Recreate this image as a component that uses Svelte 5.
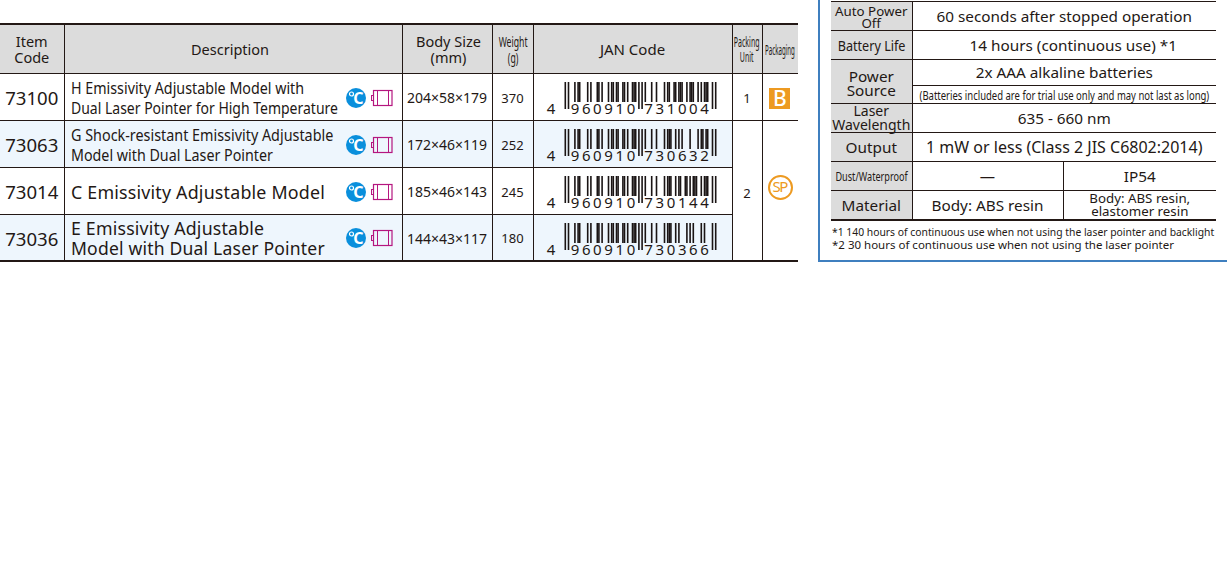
<script>
  const L = ['0001101','0011001','0010011','0111101','0100011','0110001','0101111','0111011','0110111','0001011'];
  const R = L.map((c) => [...c].map((b) => (b === '0' ? '1' : '0')).join(''));
  const G = R.map((c) => [...c].reverse().join(''));
  const PARITY = ['LLLLLL','LLGLGG','LLGGLG','LLGGGL','LGLLGG','LGGLLG','LGGGLL','LGLGLG','LGLGGL','LGGLGL'];
  const MOD = 1.6, X0 = 18.5, TX = 17;

  function bars(code) {
    const d = [...code].map(Number);
    const p = PARITY[d[0]];
    let s = '101';
    for (let i = 0; i < 6; i++) s += (p[i] === 'L' ? L : G)[d[i + 1]];
    s += '01010';
    for (let i = 0; i < 6; i++) s += R[d[i + 7]];
    s += '101';
    const out = [];
    for (let i = 0; i < s.length; i++) {
      if (s[i] !== '1') continue;
      const guard = i < 3 || i >= 92 || (i >= 45 && i < 50);
      out.push({ x: X0 + i * MOD, h: guard ? 27 : 20 });
    }
    return out;
  }
  function digits(code) {
    const out = [{ c: code[0], x: 5 }];
    for (let i = 1; i <= 6; i++) out.push({ c: code[i], x: TX + 1.6 + (3 + 7 * (i - 1) + 3.5) * MOD });
    for (let i = 7; i <= 12; i++) out.push({ c: code[i], x: TX + (50 + 7 * (i - 7) + 3.5) * MOD });
    return out;
  }

  const rows = [
    { id: '73100', lines: [['H Emissivity Adjustable Model with', 0.84], ['Dual Laser Pointer for High Temperature', 0.823]], fit: 'tight', size: '204×58×179', w: '370', jan: '4960910731004' },
    { id: '73063', lines: [['G Shock-resistant Emissivity Adjustable', 0.845], ['Model with Dual Laser Pointer', 0.84]], fit: 'tight', size: '172×46×119', w: '252', jan: '4960910730632', alt: true },
    { id: '73014', lines: [['C Emissivity Adjustable Model', 0.99]], fit: 'wide', size: '185×46×143', w: '245', jan: '4960910730144' },
    { id: '73036', lines: [['E Emissivity Adjustable', 0.985], ['Model with Dual Laser Pointer', 0.975]], fit: 'wide', size: '144×43×117', w: '180', jan: '4960910730366', alt: true }
  ];
</script>

<div class="page">
  <table class="products">
    <colgroup>
      <col style="width:64px" /><col style="width:338px" /><col style="width:90px" /><col style="width:41px" /><col style="width:199px" /><col style="width:30px" /><col style="width:36px" />
    </colgroup>
    <thead>
      <tr>
        <th class="two">Item<br />Code</th>
        <th class="dh">Description</th>
        <th class="bh">Body Size<br />(mm)</th>
        <th class="wh"><span class="squeeze s60">Weight<br />(g)</span></th>
        <th class="janh">JAN Code</th>
        <th class="two"><span class="squeeze s50 small">Packing<br />Unit</span></th>
        <th><span class="squeeze s44 small">Packaging</span></th>
      </tr>
    </thead>
    <tbody>
      {#each rows as r, i}
        <tr class:alt={r.alt}>
          <td class="id">{r.id}</td>
          <td class="desc">
            <div class="descwrap">
              <div class="name {r.fit}">
                {#each r.lines as [text, sx]}<div class="line" style="transform: scaleX({sx})">{text}</div>{/each}
              </div>
              <svg class="icons" width="50" height="22" viewBox="0 0 50 22" aria-hidden="true">
                <circle cx="12" cy="11" r="10" fill="#0a8fdc" />
                <circle cx="7.5" cy="7" r="2" fill="none" stroke="#fff" stroke-width="1.2" />
                <text x="14.5" y="17" class="deg" text-anchor="middle">C</text>
                <rect x="29.5" y="3.5" width="18.5" height="15" fill="none" stroke="#b5167f" stroke-width="1.2" />
                <line x1="33.5" y1="3.5" x2="33.5" y2="18.5" stroke="#b5167f" stroke-width="1" />
                <line x1="44.5" y1="3.5" x2="44.5" y2="18.5" stroke="#b5167f" stroke-width="1" />
                <rect x="27.5" y="8.5" width="2" height="5" fill="none" stroke="#b5167f" stroke-width="1" />
              </svg>
            </div>
          </td>
          <td class="size">{r.size}</td>
          <td class="weight">{r.w}</td>
          <td class="jan">
            <svg class="barcode" width="175" height="36" viewBox="0 0 175 36" role="img" aria-label={r.jan}>
              {#each bars(r.jan) as b}
                <rect x={b.x} y="0" width={MOD} height={b.h} fill="#1a1414" />
              {/each}
              {#each digits(r.jan) as d}
                <text x={d.x} y="32" class="digit" text-anchor="middle">{d.c}</text>
              {/each}
            </svg>
          </td>
          {#if i === 0}
            <td class="pack plain">1</td>
            <td class="plain mark">
              <span class="boxb">B</span>
            </td>
          {:else if i === 1}
            <td class="pack plain lower" rowspan="3">2</td>
            <td class="plain mark" rowspan="3">
              <span class="sp">SP</span>
            </td>
          {/if}
        </tr>
      {/each}
    </tbody>
  </table>

  <aside class="panel">
    <table class="spec">
      <colgroup><col style="width:81px" /><col style="width:151px" /><col style="width:153px" /></colgroup>
      <tbody>
        <tr class="h29"><th class="tiny auto">Auto Power<br />Off</th><td colspan="2">60 seconds after stopped operation</td></tr>
        <tr class="h29"><th class="mid"><span class="squeeze s90">Battery Life</span></th><td colspan="2" class="life">14 hours (continuous use) *1</td></tr>
        <tr class="h26"><th rowspan="2" class="pw">Power<br />Source</th><td colspan="2" class="dash">2x AAA alkaline batteries</td></tr>
        <tr class="h18"><td colspan="2" class="note"><span class="squeeze s73">(Batteries included are for trial use only and may not last as long)</span></td></tr>
        <tr class="h29"><th class="tiny laser">Laser<br />Wavelength</th><td colspan="2">635 - 660 nm</td></tr>
        <tr class="h29"><th>Output</th><td colspan="2" class="out">1 mW or less (Class 2 JIS C6802:2014)</td></tr>
        <tr class="h29"><th class="dust"><span class="squeeze s70">Dust/Waterproof</span></th><td>—</td><td>IP54</td></tr>
        <tr class="h29"><th>Material</th><td>Body: ABS resin</td><td class="tiny">Body: ABS resin,<br />elastomer resin</td></tr>
      </tbody>
    </table>
    <div class="foot">
      <div class="foot1">*1 140 hours of continuous use when not using the laser pointer and backlight</div>
      <div>*2 30 hours of continuous use when not using the laser pointer</div>
    </div>
  </aside>
</div>

<style>
  :global(body) {
    margin: 0;
    background: #fff;
  }
  .page {
    display: flex;
    align-items: flex-start;
    width: 1227px;
    height: 578px;
    overflow: hidden;
    font-family: "Noto Sans", "Liberation Sans", sans-serif;
    color: #231815;
  }
  table {
    border-collapse: collapse;
    table-layout: fixed;
  }
  .products {
    width: 798px;
    flex: none;
    margin-top: 23px;
    border-top: 2px solid #231815;
    border-bottom: 2px solid #231815;
  }
  .products th,
  .products td {
    border: 1px solid #231815;
    padding: 0;
    text-align: center;
    white-space: nowrap;
  }
  .products tr > :first-child { border-left: 0; }
  .products tr > :last-child { border-right: 0; }
  .products tbody tr:last-child td { border-bottom: 0; }
  .products thead th { border-top: 0; }
  .products thead tr { height: 49px; }
  .products tbody tr { height: 47px; }
  .products thead th {
    background: #dcdcdc;
    font-weight: 400;
    font-size: 14.5px;
    line-height: 16px;
  }
  .products thead th.dh { padding: 1px 6px 0 0; }
  .products thead th.bh { padding-left: 3px; }
  .products thead th.wh { padding-left: 1px; }
  .products thead th.janh { font-size: 15px; padding-top: 1px; }
  .alt td { background: #eef6fd; }
  .alt td.plain, td.plain { background: #fff; }
  .products td.id {
    font-size: 18.6px;
    padding-top: 2px;
  }
  .descwrap {
    display: flex;
    align-items: center;
    padding: 2px 8px 0 6px;
  }
  .name {
    flex: 1;
    min-width: 0;
    text-align: left;
  }
  .line {
    font-size: 17px;
    line-height: 20px;
    transform-origin: left center;
  }
  .wide .line { font-size: 18px; letter-spacing: 0.2px; }
  .icons { flex: none; }
  .deg {
    fill: #fff;
    font-size: 16px;
    font-weight: 700;
  }
  .products td.size {
    font-size: 14px;
    padding-top: 2px;
  }
  .products td.weight, .products td.pack {
    font-size: 13px;
    padding-top: 2px;
  }
  .products td.lower { padding-top: 5px; }
  .products td.jan {
    text-align: left;
    padding: 8px 0 0 12px;
    vertical-align: top;
  }
  .barcode { display: block; }
  .digit {
    font-size: 15px;
    fill: #231815;
  }
  .squeeze {
    display: inline-block;
    transform-origin: center;
  }
  .s60 { transform: scaleX(0.6); margin: 0 -30px; }
  .s50 { transform: scaleX(0.5); margin: 0 -30px; }
  .s44 { transform: scaleX(0.44); margin: 0 -40px; }
  .s70 { transform: scaleX(0.7); margin: 0 -60px; }
  .s73 { transform: scaleX(0.73); margin: 0 -80px; }
  .s90 { transform: scaleX(0.9); margin: 0 -10px; }
  .products thead th .small { font-size: 14px; line-height: 15px; }
  .boxb {
    display: inline-block;
    width: 21px;
    height: 21px;
    line-height: 21px;
    background: #ed9a21;
    color: #fff;
    font-size: 21px;
    font-weight: 500;
    vertical-align: middle;
    margin-top: 3px;
    margin-left: -1px;
  }
  .sp {
    display: inline-block;
    box-sizing: border-box;
    width: 25px;
    height: 25px;
    border: 2.5px solid #ed9a21;
    border-radius: 50%;
    color: #ed9a21;
    font-size: 15px;
    line-height: 19px;
    letter-spacing: -1.5px;
    text-indent: -1px;
    vertical-align: middle;
    margin-bottom: 5px;
  }

  .panel {
    box-sizing: border-box;
    flex: none;
    width: 409px;
    height: 262px;
    margin-left: 20px;
    padding: 1px 0 0 11px;
    border-left: 2px solid #3f7fbf;
    border-bottom: 2px solid #3f7fbf;
  }
  .spec {
    width: 385px;
    border-top: 1px solid #231815;
    border-bottom: 2px solid #231815;
  }
  .spec th,
  .spec td {
    border: 1px solid #231815;
    padding: 0;
    text-align: center;
    font-weight: 400;
    font-size: 15.3px;
    white-space: nowrap;
  }
  .spec tr > :first-child { border-left: 0; }
  .spec tr > :last-child { border-right: 0; }
  .spec tr:first-child > * { border-top: 0; }
  .spec tr:last-child > * { border-bottom: 0; }
  .spec th { background: #dcdcdc; }
  .h29 { height: 29px; }
  .h26 { height: 26px; }
  .h18 { height: 18px; }
  .spec th.tiny, .spec td.tiny {
    font-size: 13.3px;
    line-height: 13px;
  }
  .spec th.auto { padding-top: 2px; line-height: 12.5px; }
  .spec th.mid { font-size: 14px; }
  .spec td.life { padding-left: 18px; }
  .spec th.pw { line-height: 14px; padding-top: 2px; }
  .spec th.laser { font-size: 14px; line-height: 14px; }
  .spec td.dash { border-bottom: 1px dashed #231815; padding-bottom: 2px; }
  .spec td.out { font-size: 16px; }
  .spec td.note { font-size: 13px; line-height: 16px; }
  .spec th.dust { font-size: 13px; }
  .foot {
    margin-top: 4px;
    margin-left: 1px;
    font-size: 11.5px;
    line-height: 13px;
    white-space: nowrap;
  }
  .foot1 {
    transform: scaleX(0.9);
    transform-origin: left center;
  }
</style>
